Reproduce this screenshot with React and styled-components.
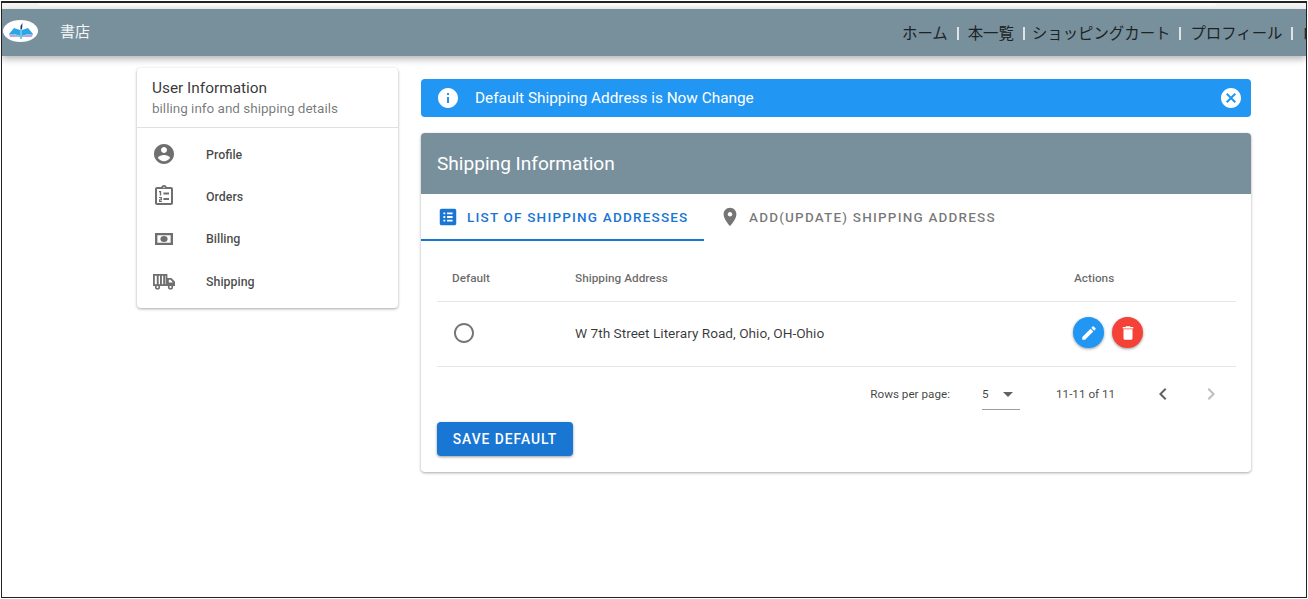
import React from "react";
import styled, { createGlobalStyle } from "styled-components";

const GlobalStyle = createGlobalStyle`
  html, body {
    margin: 0;
    padding: 0;
    background: #fff;
    font-family: Roboto, "Noto Sans CJK JP", sans-serif;
  }
`;

const Frame = styled.div`
  box-sizing: border-box;
  width: 1306px;
  height: 597px;
  margin: 1px 0 0 1px;
  border: 1px solid #222;
  border-top-width: 2px;
  overflow: hidden;
  background: #fff;
`;

const TopStrip = styled.div`
  height: 6px;
  background: #f4f4f4;

  &::before {
    content: "";
    display: block;
    height: 3px;
    margin: 0 90px 0 36px;
    border-radius: 0 0 6px 6px;
    background: #fbfbfb;
  }
`;

const NavBar = styled.header`
  height: 47px;
  background: #78909c;
  display: flex;
  align-items: center;
  box-shadow: 0 3px 7px rgba(0, 0, 0, 0.3);
  position: relative;
  white-space: nowrap;
`;

const Logo = styled.div`
  width: 35px;
  height: 22px;
  margin: 0 0 3px 1px;
  border-radius: 50%;
  background: #fff;
  display: flex;
  align-items: center;
  justify-content: center;
  flex: none;
`;

const Brand = styled.div`
  margin: 0 0 5px 22px;
  color: #f4f6f7;
  font-size: 15px;
  font-family: "Noto Sans CJK JP", sans-serif;
  flex: 1;
`;

const NavLinks = styled.nav`
  display: flex;
  align-items: center;
  width: 404px;
  flex: none;
  overflow: hidden;
  padding-bottom: 1px;
  font-family: "Noto Sans CJK JP", sans-serif;
  font-size: 15.4px;
  color: #1c2326;
`;

const NavSep = styled.span`
  width: 2px;
  height: 13px;
  background: #dfe4e7;
  margin: 2px ${(props) => props.after || 9}px 0 9px;
  flex: none;
`;

const Page = styled.div`
  display: flex;
  align-items: flex-start;
  padding-left: 135px;
`;

const Sidebar = styled.aside`
  width: 261px;
  margin-top: 12px;
  border-radius: 4px;
  background: #fff;
  box-shadow: 0 1px 3px rgba(0, 0, 0, 0.35);
  flex: none;
`;

const SideHead = styled.div`
  height: 60px;
  box-sizing: border-box;
  padding: 11px 15px 0;
  border-bottom: 1px solid #e0e0e0;
`;

const SideTitle = styled.div`
  font-size: 15.4px;
  line-height: 19px;
  color: rgba(0, 0, 0, 0.8);
`;

const SideSub = styled.div`
  font-size: 13.5px;
  line-height: 20px;
  color: rgba(0, 0, 0, 0.54);
`;

const SideList = styled.div`
  padding: 5px 0 6px;
`;

const SideItem = styled.div`
  height: 42.3px;
  display: flex;
  align-items: center;
  padding-left: 15px;
  font-size: 12.4px;
  font-weight: 500;
  color: rgba(0, 0, 0, 0.72);
`;

const SideIcon = styled.svg`
  width: 24px;
  height: 24px;
  fill: #6f6f6f;
  margin-right: 30px;
  flex: none;
`;

const Main = styled.main`
  width: 830px;
  margin-left: 23px;
  margin-top: 23px;
  flex: none;
`;

const Alert = styled.div`
  height: 38px;
  border-radius: 4px;
  background: #2196f3;
  color: #fff;
  display: flex;
  align-items: center;
  padding: 0 8px 0 15px;
  font-size: 15.35px;
`;

const AlertText = styled.span`
  margin-left: 15px;
  flex: 1;
`;

const WhiteIcon = styled.svg`
  width: 24px;
  height: 24px;
  fill: #fff;
  flex: none;
`;

const Card = styled.section`
  margin-top: 16px;
  border-radius: 4px;
  background: #fff;
  box-shadow: 0 1px 3px rgba(0, 0, 0, 0.35);
  overflow: hidden;
  height: 339px;
`;

const CardHead = styled.div`
  height: 61px;
  background: #78909c;
  color: #fff;
  font-size: 19.1px;
  display: flex;
  align-items: center;
  padding-left: 16px;
`;

const Tabs = styled.div`
  display: flex;
  height: 47px;
`;

const Tab = styled.div`
  width: ${(props) => props.width}px;
  box-sizing: border-box;
  display: flex;
  align-items: center;
  padding: 1px 0 0 ${(props) => props.pad}px;
  font-size: 13.5px;
  font-weight: 500;
  letter-spacing: 1.2px;
  color: ${(props) => (props.active ? "#1976d2" : "rgba(0, 0, 0, 0.54)")};
  border-bottom: 2px solid ${(props) => (props.active ? "#1976d2" : "transparent")};
`;

const TabIcon = styled.svg`
  width: 22px;
  height: 22px;
  margin-right: 8px;
  fill: ${(props) => (props.active ? "#1976d2" : "#757575")};
  flex: none;
`;

const TableArea = styled.div`
  padding: 14px 15px 0 16px;
`;

const Row = styled.div`
  display: grid;
  grid-template-columns: 138px 499px 1fr;
  align-items: center;
  box-sizing: border-box;
  height: ${(props) => props.height}px;
  padding-bottom: ${(props) => props.lift || 0}px;
  border-bottom: 1px solid #e6e6e6;
`;

const HeadCell = styled.div`
  font-size: 11.8px;
  font-weight: 500;
  color: rgba(0, 0, 0, 0.6);
  padding-left: ${(props) => props.pad || 0}px;
`;

const BodyCell = styled.div`
  font-size: 13.67px;
  color: rgba(0, 0, 0, 0.78);
`;

const Radio = styled.svg`
  width: 24px;
  height: 24px;
  fill: #757575;
  margin-left: 15px;
  display: block;
`;

const Actions = styled.div`
  display: flex;
  gap: 8px;
  margin-left: -1px;
`;

const Fab = styled.div`
  width: 31px;
  height: 31px;
  border-radius: 50%;
  background: ${(props) => props.color};
  box-shadow: 0 1px 3px rgba(0, 0, 0, 0.4);
  display: flex;
  align-items: center;
  justify-content: center;
`;

const FabIcon = styled.svg`
  width: 18px;
  height: 18px;
  fill: #fff;
`;

const Pager = styled.div`
  display: flex;
  align-items: center;
  justify-content: flex-end;
  box-sizing: border-box;
  height: 55px;
  padding-bottom: 2px;
  font-size: 11.7px;
  color: rgba(0, 0, 0, 0.75);
`;

const RowsSelect = styled.div`
  width: 38px;
  height: 30px;
  box-sizing: border-box;
  margin: 2px 0 0 32px;
  border-bottom: 1px solid #9e9e9e;
  display: flex;
  align-items: center;
  justify-content: space-between;
`;

const Caret = styled.svg`
  width: 24px;
  height: 24px;
  fill: #616161;
`;

const PageRange = styled.span`
  margin-left: 36px;
  width: 95px;
`;

const Chevron = styled.svg`
  width: 24px;
  height: 24px;
  fill: ${(props) => (props.disabled ? "#bdbdbd" : "#616161")};
  margin-right: ${(props) => (props.disabled ? 13 : 24)}px;
`;

const SaveButton = styled.button`
  display: block;
  width: 136px;
  height: 34px;
  border: 0;
  border-radius: 4px;
  background: #1976d2;
  color: #fff;
  font-family: Roboto, sans-serif;
  font-size: 13.8px;
  font-weight: 500;
  letter-spacing: 1px;
  padding: 0;
  box-shadow: 0 1px 3px rgba(0, 0, 0, 0.4);
`;

function ProfileIcon() {
  return (
    <SideIcon viewBox="0 0 24 24">
      <path d="M12 2C6.48 2 2 6.48 2 12s4.48 10 10 10 10-4.48 10-10S17.52 2 12 2zm0 3c1.66 0 3 1.34 3 3s-1.34 3-3 3-3-1.34-3-3 1.34-3 3-3zm0 14.2c-2.5 0-4.71-1.28-6-3.22.03-1.99 4-3.08 6-3.08 1.99 0 5.97 1.09 6 3.08-1.29 1.94-3.5 3.22-6 3.22z" />
    </SideIcon>
  );
}

function OrdersIcon() {
  return (
    <SideIcon viewBox="0 0 24 24">
      <path d="M19 3h-4.18C14.4 1.84 13.3 1 12 1s-2.4.84-2.82 2H5c-1.1 0-2 .9-2 2v14c0 1.1.9 2 2 2h14c1.1 0 2-.9 2-2V5c0-1.1-.9-2-2-2zm-7-.25c.41 0 .75.34.75.75s-.34.75-.75.75-.75-.34-.75-.75.34-.75.75-.75zM19 19H5V5h14v14z" />
      <path d="M7 7h2.2v4.6H7.8V8.2H7zM7 13h3v3.2H8.4v.7H10V18H7v-2.8h1.6v-1.1H7zM11.4 8.5h5.6v2h-5.6zM11.4 14h5.6v2h-5.6z" />
    </SideIcon>
  );
}

function BillingIcon() {
  return (
    <SideIcon viewBox="0 0 24 24">
      <path fillRule="evenodd" d="M3 6h18v12H3zM5.4 8.2v7.6h13.2V8.2z" />
      <ellipse cx="12" cy="12" rx="3.6" ry="2.9" />
    </SideIcon>
  );
}

function ShippingIcon() {
  return (
    <SideIcon viewBox="0 0 24 24">
      <path fillRule="evenodd" d="M1 5h14.4v12H1zM2.8 6.8v8.4h10.8V6.8z" />
      <path d="M4.8 6h1.9v10H4.8zM8 6h1.9v10H8zM11.2 6h1.9v10h-1.9z" />
      <path
        fillRule="evenodd"
        d="M15 9h4.4L23 12.8V17h-8zM16.8 10.8v2.6h4.2l-2.5-2.6z"
      />
      <circle cx="5.5" cy="18" r="2.6" />
      <circle cx="18.5" cy="18" r="2.6" />
      <circle cx="5.5" cy="18" r="1.1" fill="#fff" />
      <circle cx="18.5" cy="18" r="1.1" fill="#fff" />
    </SideIcon>
  );
}

function BookLogo() {
  return (
    <svg width="26" height="16" viewBox="0 0 26 16">
      <path d="M1 11 L6 5 L12 7 L12 13 L6 11 Z" fill="#29a7e8" />
      <path d="M25 11 L20 5 L14 7 L14 13 L20 11 Z" fill="#29a7e8" />
      <path d="M1 11 L6 11 L12 13 L14 13 L20 11 L25 11 L24 14 L2 14 Z" fill="#a9b2d6" />
      <path d="M12.5 7 L12.5 3 L14.5 0 L14 7 Z" fill="#2b2f7a" />
      <rect x="12" y="6" width="2" height="10" fill="#6fc3ee" />
    </svg>
  );
}

export default function App() {
  const menu = [
    { label: "Profile", icon: <ProfileIcon /> },
    { label: "Orders", icon: <OrdersIcon /> },
    { label: "Billing", icon: <BillingIcon /> },
    { label: "Shipping", icon: <ShippingIcon /> },
  ];

  return (
    <>
      <GlobalStyle />
      <Frame>
        <TopStrip />
        <NavBar>
          <Logo>
            <BookLogo />
          </Logo>
          <Brand>書店</Brand>
          <NavLinks>
            <span>ホーム</span>
            <NavSep />
            <span>本一覧</span>
            <NavSep after={7} />
            <span>ショッピングカート</span>
            <NavSep />
            <span>プロフィール</span>
            <NavSep />
            <span>ログアウト</span>
          </NavLinks>
        </NavBar>
        <Page>
          <Sidebar>
            <SideHead>
              <SideTitle>User Information</SideTitle>
              <SideSub>billing info and shipping details</SideSub>
            </SideHead>
            <SideList>
              {menu.map((item) => (
                <SideItem key={item.label}>
                  {item.icon}
                  {item.label}
                </SideItem>
              ))}
            </SideList>
          </Sidebar>
          <Main>
            <Alert>
              <WhiteIcon viewBox="0 0 24 24">
                <path d="M12 2C6.48 2 2 6.48 2 12s4.48 10 10 10 10-4.48 10-10S17.52 2 12 2zm1 15h-2v-6h2v6zm0-8h-2V7h2v2z" />
              </WhiteIcon>
              <AlertText>Default Shipping Address is Now Change</AlertText>
              <WhiteIcon viewBox="0 0 24 24">
                <path d="M12 2C6.47 2 2 6.47 2 12s4.47 10 10 10 10-4.47 10-10S17.53 2 12 2zm5 13.59L15.59 17 12 13.41 8.41 17 7 15.59 10.59 12 7 8.41 8.41 7 12 10.59 15.59 7 17 8.41 13.41 12 17 15.59z" />
              </WhiteIcon>
            </Alert>
            <Card>
              <CardHead>Shipping Information</CardHead>
              <Tabs>
                <Tab active width={283} pad={16}>
                  <TabIcon active viewBox="0 0 24 24">
                    <path d="M19 3H5c-1.1 0-2 .9-2 2v14c0 1.1.9 2 2 2h14c1.1 0 2-.9 2-2V5c0-1.1-.9-2-2-2zM9 17H7v-2h2v2zm0-4H7v-2h2v2zm0-4H7V7h2v2zm8 8h-6v-2h6v2zm0-4h-6v-2h6v2zm0-4h-6V7h6v2z" />
                  </TabIcon>
                  LIST OF SHIPPING ADDRESSES
                </Tab>
                <Tab width={320} pad={15}>
                  <TabIcon viewBox="0 0 24 24">
                    <path d="M12 2C8.13 2 5 5.13 5 9c0 5.25 7 13 7 13s7-7.75 7-13c0-3.87-3.13-7-7-7zm0 9.5c-1.38 0-2.5-1.12-2.5-2.5s1.12-2.5 2.5-2.5 2.5 1.12 2.5 2.5-1.12 2.5-2.5 2.5z" />
                  </TabIcon>
                  ADD(UPDATE) SHIPPING ADDRESS
                </Tab>
              </Tabs>
              <TableArea>
                <Row height={47}>
                  <HeadCell pad={15}>Default</HeadCell>
                  <HeadCell>Shipping Address</HeadCell>
                  <HeadCell>Actions</HeadCell>
                </Row>
                <Row height={65} lift={3}>
                  <BodyCell>
                    <Radio viewBox="0 0 24 24">
                      <path d="M12 2C6.48 2 2 6.48 2 12s4.48 10 10 10 10-4.48 10-10S17.52 2 12 2zm0 18c-4.42 0-8-3.58-8-8s3.58-8 8-8 8 3.58 8 8-3.58 8-8 8z" />
                    </Radio>
                  </BodyCell>
                  <BodyCell>W 7th Street Literary Road, Ohio, OH-Ohio</BodyCell>
                  <Actions>
                    <Fab color="#2196f3">
                      <FabIcon viewBox="0 0 24 24">
                        <path d="M3 17.25V21h3.75L17.81 9.94l-3.75-3.75L3 17.25zM20.71 7.04c.39-.39.39-1.02 0-1.41l-2.34-2.34c-.39-.39-1.02-.39-1.41 0l-1.83 1.83 3.75 3.75 1.83-1.83z" />
                      </FabIcon>
                    </Fab>
                    <Fab color="#f44336">
                      <FabIcon viewBox="0 0 24 24">
                        <path d="M6 19c0 1.1.9 2 2 2h8c1.1 0 2-.9 2-2V7H6v12zM19 4h-3.5l-1-1h-5l-1 1H5v2h14V4z" />
                      </FabIcon>
                    </Fab>
                  </Actions>
                </Row>
                <Pager>
                  <span>Rows per page:</span>
                  <RowsSelect>
                    5
                    <Caret viewBox="0 0 24 24">
                      <path d="M7 10l5 5 5-5z" />
                    </Caret>
                  </RowsSelect>
                  <PageRange>11-11 of 11</PageRange>
                  <Chevron viewBox="0 0 24 24">
                    <path d="M15.41 7.41L14 6l-6 6 6 6 1.41-1.41L10.83 12z" />
                  </Chevron>
                  <Chevron disabled viewBox="0 0 24 24">
                    <path d="M10 6L8.59 7.41 13.17 12l-4.58 4.59L10 18l6-6z" />
                  </Chevron>
                </Pager>
                <SaveButton>SAVE DEFAULT</SaveButton>
              </TableArea>
            </Card>
          </Main>
        </Page>
      </Frame>
    </>
  );
}
